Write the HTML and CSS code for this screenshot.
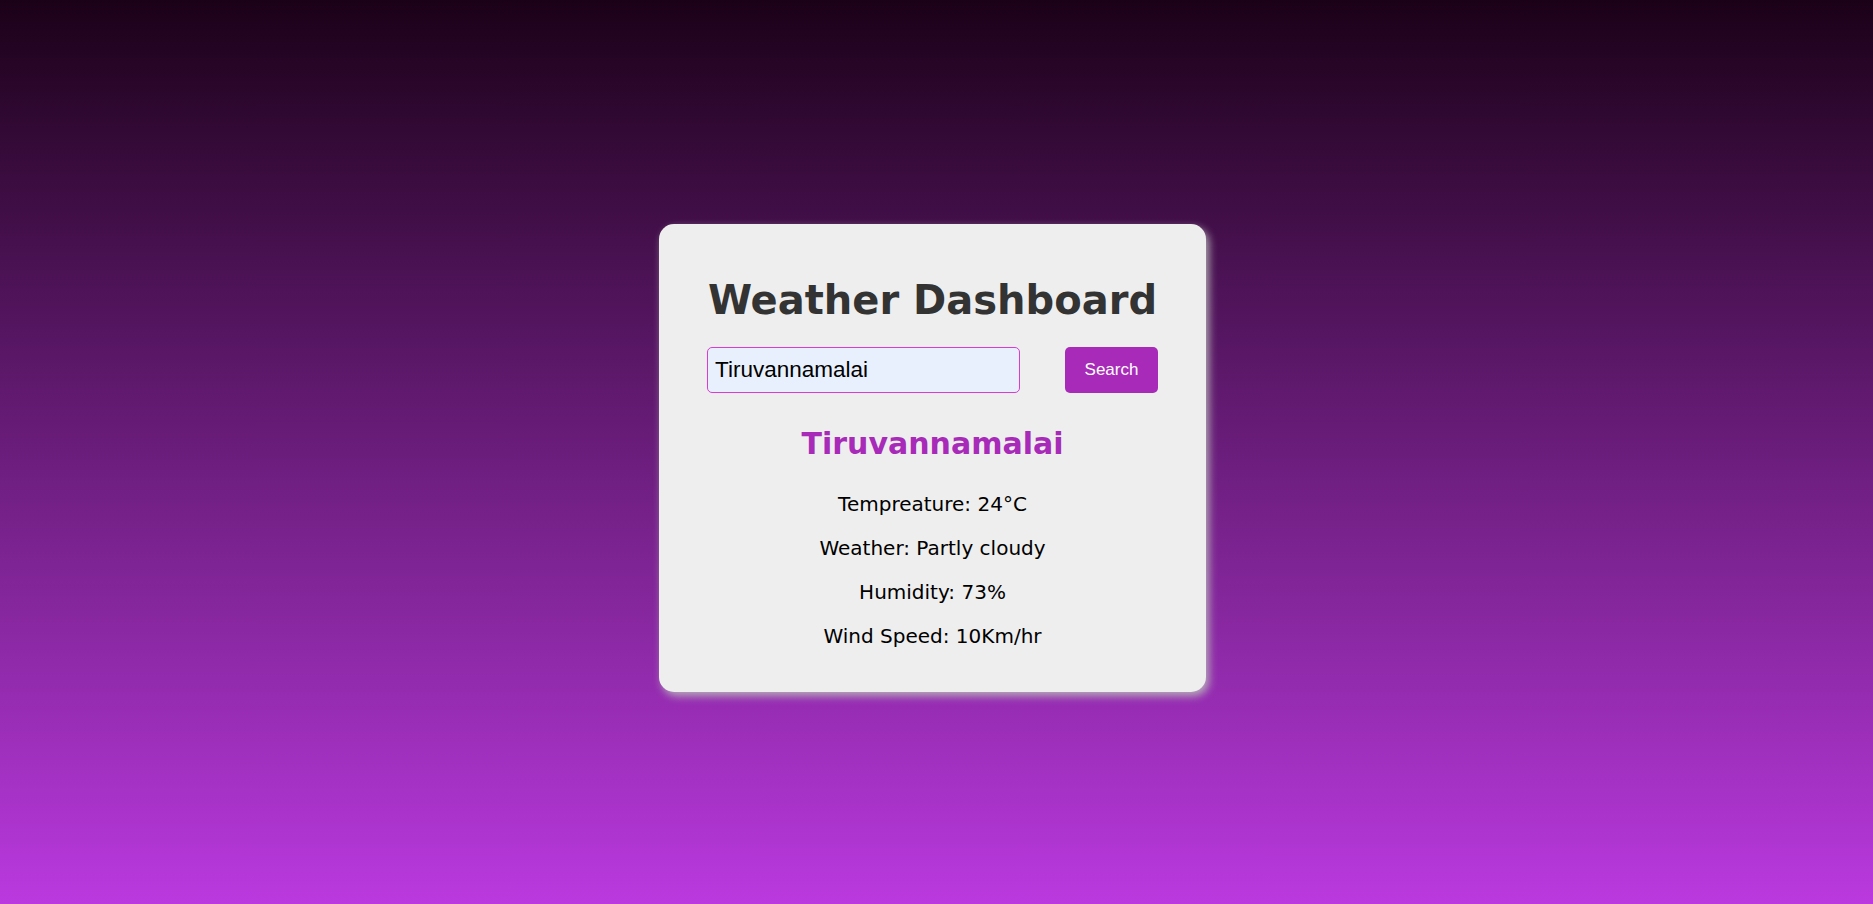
FILE: index.html
```html
<!DOCTYPE html>
<html lang="en">
<head>
<meta charset="utf-8">
<title>Weather Dashboard</title>
<link rel="stylesheet" href="styles.css">
</head>
<body>
  <main class="card">
    <h1 class="title">Weather Dashboard</h1>
    <div class="search-row">
      <input class="city-input" type="text" value="Tiruvannamalai">
      <button class="search-btn" type="button">Search</button>
    </div>
    <h2 class="city-name">Tiruvannamalai</h2>
    <div class="info">
      <p class="info-line">Tempreature: 24°C</p>
      <p class="info-line">Weather: Partly cloudy</p>
      <p class="info-line">Humidity: 73%</p>
      <p class="info-line">Wind Speed: 10Km/hr</p>
    </div>
  </main>
</body>
</html>
```
FILE: styles.css
```css
* {
  box-sizing: border-box;
}

html, body {
  height: 100%;
}

body {
  margin: 0;
  min-height: 100vh;
  padding: 12px 8px 0 0;
  display: flex;
  justify-content: center;
  align-items: center;
  background: linear-gradient(to bottom, #1b0118 0%, #ba39df 100%);
  font-family: "DejaVu Sans", Verdana, sans-serif;
}

.card {
  width: 547px;
  padding: 25px 0 44px;
  background: #eeeeee;
  border-radius: 15px;
  box-shadow: 3px 4px 9px rgba(185, 185, 185, 0.9);
  display: flex;
  flex-direction: column;
  align-items: center;
  text-align: center;
}

.title {
  margin: 28px 0 23px;
  font-size: 40px;
  line-height: 47px;
  font-weight: bold;
  color: #333333;
}

.search-row {
  display: flex;
  gap: 45px;
  height: 46px;
}

.city-input {
  width: 313px;
  height: 46px;
  padding: 0 0 0 7px;
  border: 1px solid #d93bd3;
  border-radius: 5px;
  background: #e8f0fe;
  color: #000;
  font-family: "Liberation Sans", Arial, sans-serif;
  font-size: 22.5px;
  outline: none;
}

.search-btn {
  width: 93px;
  height: 46px;
  border: none;
  border-radius: 5px;
  background: #a82ab8;
  color: #ffffff;
  font-family: "Liberation Sans", Arial, sans-serif;
  font-size: 17px;
  cursor: pointer;
}

.city-name {
  margin: 33px 0 31px;
  font-size: 30px;
  line-height: 35px;
  font-weight: bold;
  color: #a82ab8;
}

.info {
  display: flex;
  flex-direction: column;
  gap: 20px;
}

.info-line {
  margin: 0;
  font-size: 20px;
  line-height: 24px;
  color: #000;
}
```
